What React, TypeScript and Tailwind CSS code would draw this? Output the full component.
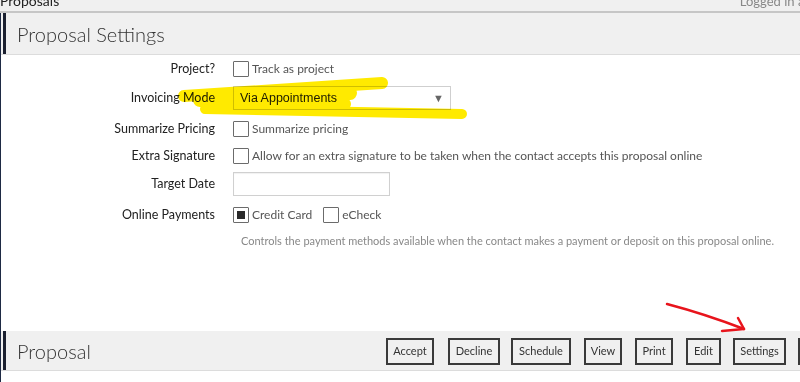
import React from 'react'

function Box({ checked = false }: { checked?: boolean }) {
  return (
    <span className="w-[16px] h-[16px] shrink-0 border-[1.5px] border-[#6b6b6b] bg-white rounded-[1px] flex items-center justify-center">
      {checked && <span className="w-[8px] h-[8px] bg-[#2a2a2a]" />}
    </span>
  )
}

function Row({ label, children, className = '' }: { label: string; children: React.ReactNode; className?: string }) {
  return (
    <div className={`flex items-center ${className}`}>
      <div className="w-[214px] shrink-0 text-right text-[12.5px] text-[#222]">{label}</div>
      <div className="ml-[18px] flex items-center">{children}</div>
    </div>
  )
}

const buttons = [
  { label: 'Accept', w: 'w-[48px]', ml: 'ml-0' },
  { label: 'Decline', w: 'w-[52px]', ml: 'ml-[14px]' },
  { label: 'Schedule', w: 'w-[60px]', ml: 'ml-[11px]' },
  { label: 'View', w: 'w-[38px]', ml: 'ml-[13px]' },
  { label: 'Print', w: 'w-[38px]', ml: 'ml-[13px]' },
  { label: 'Edit', w: 'w-[35px]', ml: 'ml-[13px]' },
  { label: 'Settings', w: 'w-[53px]', ml: 'ml-[12px]' },
  { label: 'Delete', w: 'w-[48px]', ml: 'ml-[12px]' },
]

export default function App() {
  return (
    <div className="relative w-[800px] h-[382px] overflow-hidden bg-white font-['Lato',sans-serif]">
      {/* top strip */}
      <div className="h-[11px] bg-[#f0f0f0] flex items-end justify-between overflow-hidden">
        <span className="text-[14px] leading-none text-[#222] mb-[3px] shrink-0">Proposals</span>
        <span className="text-[13px] leading-none text-[#888] mb-[3px] mr-[-10px] shrink-0">Logged in as</span>
      </div>
      <div className="h-[2px] bg-[#c6c6c6]" />

      <div className="border-l border-[#1e2a44] h-[369px] flex flex-col">
        {/* header */}
        <div className="h-[42px] shrink-0 bg-[#f0f0f0] border-b border-[#dcdcdc] flex items-stretch">
          <div className="ml-[2px] w-[3px] shrink-0 bg-[#1b2030]" />
          <div className="pl-[11px] flex items-center text-[20px] font-light text-[#333]">Proposal Settings</div>
        </div>

        {/* form */}
        <div className="flex flex-col">
          <Row label="Project?" className="mt-[6px] h-[16px]">
            <Box />
            <span className="ml-[3px] text-[12px] text-[#555]">Track as project</span>
          </Row>
          <Row label="Invoicing Mode" className="mt-[9px] h-[24px]">
            <div className="w-[218px] h-[24px] border border-[#cfcfcf] bg-white flex items-center justify-between pl-[6px] pr-[6px] font-['Liberation_Sans',sans-serif]">
              <span className="text-[12.5px] text-[#222]">Via Appointments</span>
              <span className="text-[11px] text-[#666]">▼</span>
            </div>
          </Row>
          <Row label="Summarize Pricing" className="mt-[11px] h-[16px]">
            <Box />
            <span className="ml-[3px] text-[12px] text-[#555]">Summarize pricing</span>
          </Row>
          <Row label="Extra Signature" className="mt-[11px] h-[16px]">
            <Box />
            <span className="ml-[3px] text-[12px] text-[#555]">Allow for an extra signature to be taken when the contact accepts this proposal online</span>
          </Row>
          <Row label="Target Date" className="mt-[8px] h-[24px]">
            <div className="w-[157px] h-[24px] border border-[#d0d0d0] bg-white shadow-[inset_0_1px_1px_rgba(0,0,0,0.06)]" />
          </Row>
          <Row label="Online Payments" className="mt-[11px] h-[16px]">
            <Box checked />
            <span className="ml-[3px] text-[12px] text-[#555]">Credit Card</span>
            <span className="ml-[11px]"><Box /></span>
            <span className="ml-[3px] text-[12px] text-[#555]">eCheck</span>
          </Row>
          <div className="mt-[11px] ml-[240px] text-[11px] text-[#888] leading-[14px]">
            Controls the payment methods available when the contact makes a payment or deposit on this proposal online.
          </div>
        </div>

        {/* bottom panel */}
        <div className="mt-auto mb-[11px] h-[40px] shrink-0 bg-[#f0f0f0] border-b border-[#dcdcdc] flex items-stretch overflow-hidden">
          <div className="ml-[2px] w-[3px] shrink-0 bg-[#1b2030]" />
          <div className="w-[380px] shrink-0 pl-[11px] flex items-center text-[20px] font-light text-[#333]">Proposal</div>
          <div className="flex items-center shrink-0 pt-[1px]">
            {buttons.map((b) => (
              <div
                key={b.label}
                className={`${b.w} ${b.ml} shrink-0 h-[27px] border-2 border-[#3a3a3a] bg-[#f0f0f0] flex items-center justify-center text-[11px] text-[#333]`}
              >
                {b.label}
              </div>
            ))}
          </div>
        </div>
      </div>

      {/* annotations */}
      <svg className="absolute left-0 top-0 pointer-events-none" width="800" height="382" viewBox="0 0 800 382">
        <g stroke="#ffea00" strokeLinecap="round" fill="none" style={{ mixBlendMode: 'multiply' }}>
          <path d="M184 96 L382 83" strokeWidth="12" />
          <path d="M200 100 L350 93" strokeWidth="14" />
          <path d="M210 104 L345 104" strokeWidth="12" />
          <path d="M205 109 L462 114" strokeWidth="10" />
        </g>
        <g stroke="#e8141c" strokeWidth="2.5" strokeLinecap="round" strokeLinejoin="round" fill="none">
          <path d="M667 304 Q705 314 744 329" />
          <path d="M738 318 L744 329 L722 331" />
        </g>
      </svg>
    </div>
  )
}
